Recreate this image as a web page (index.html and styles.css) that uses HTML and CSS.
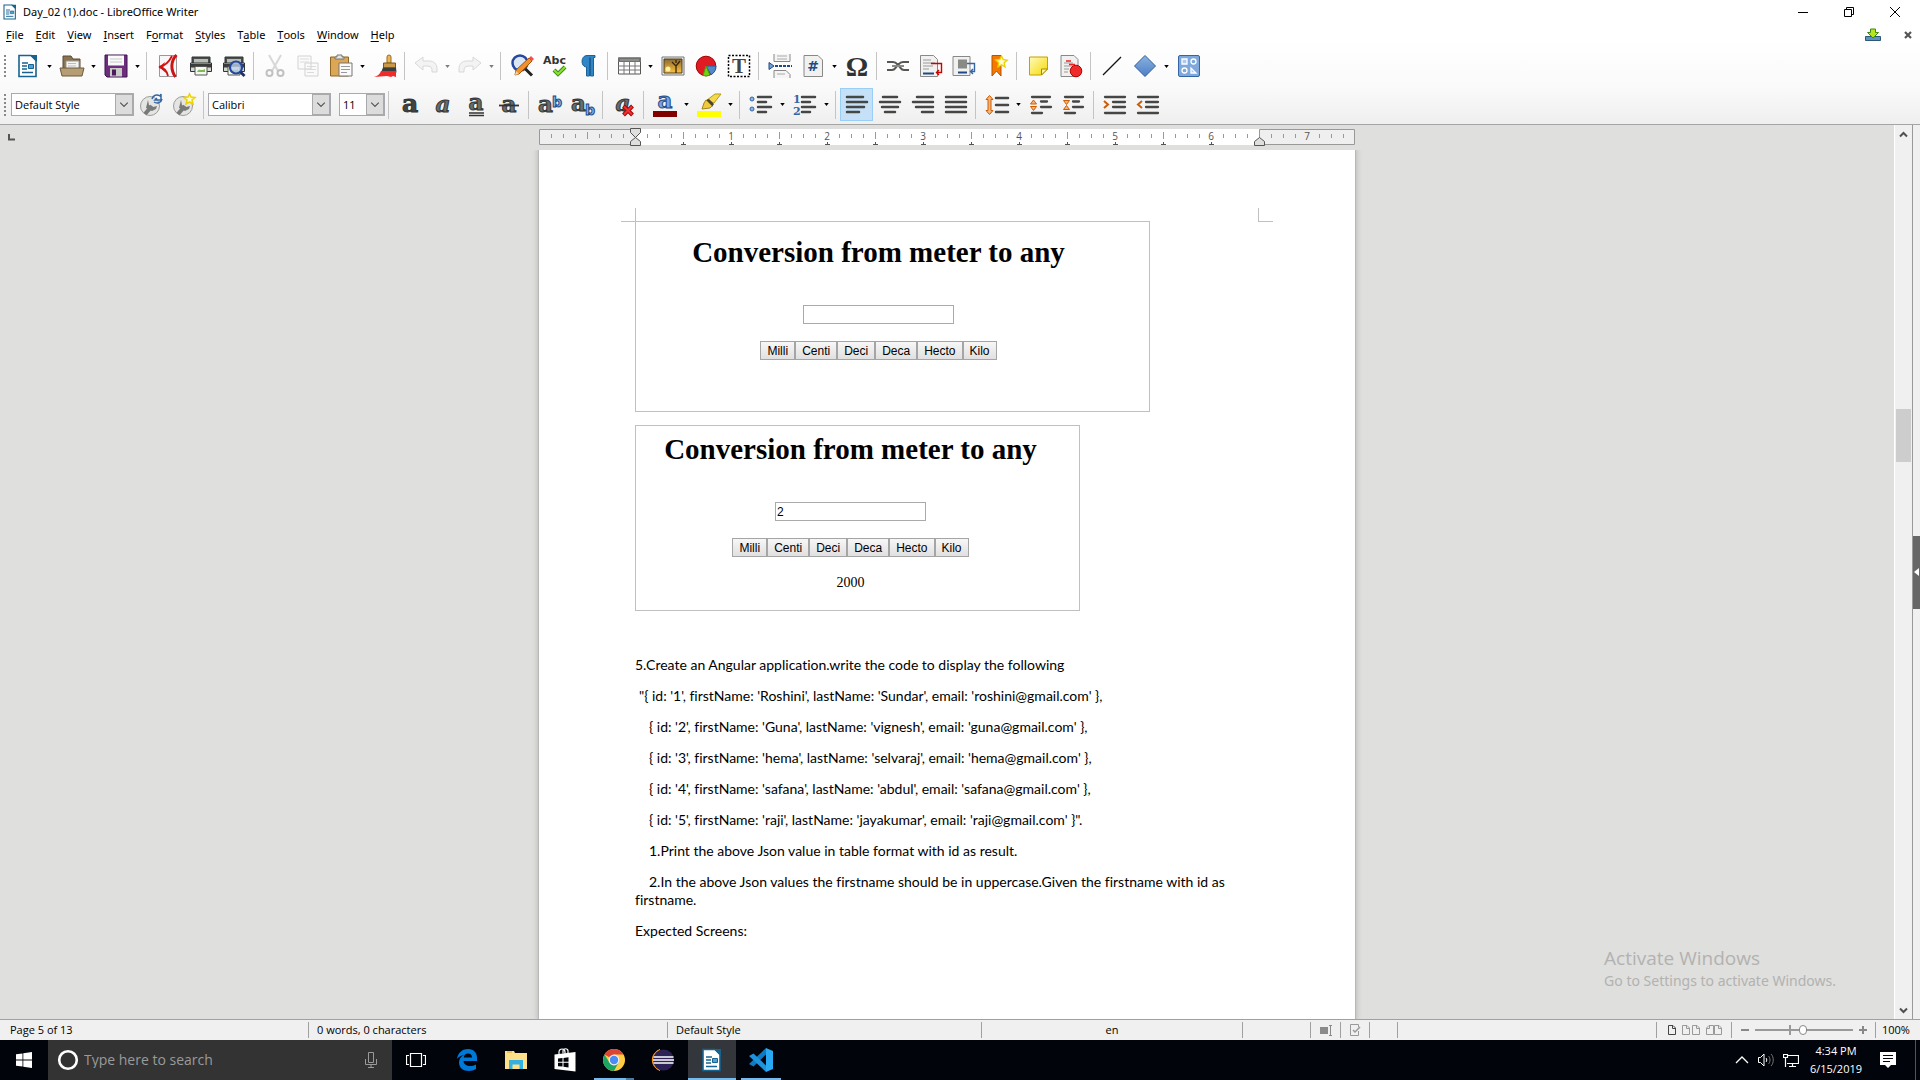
FILE: index.html
```html
<!DOCTYPE html>
<html lang="en">
<head>
<meta charset="utf-8">
<title>Day_02 (1).doc - LibreOffice Writer</title>
<link rel="stylesheet" href="styles.css">
</head>
<body>
<svg class="defs" aria-hidden="true">
  <defs>
    <linearGradient id="gem" x1="0" y1="0" x2="0" y2="1"><stop offset="0" stop-color="#8db2e0"/><stop offset="1" stop-color="#4a7fc4"/></linearGradient>
    <linearGradient id="sun" x1="0" y1="0" x2="0" y2="1"><stop offset="0" stop-color="#8a6a32"/><stop offset="1" stop-color="#ffc23c"/></linearGradient>
    <linearGradient id="note" x1="0" y1="0" x2="1" y2="1"><stop offset="0" stop-color="#fffac0"/><stop offset="1" stop-color="#f6d900"/></linearGradient>
    <symbol id="drop" viewBox="0 0 6 4"><path d="M0 0h6L3 4z"/></symbol>
    <symbol id="chev" viewBox="0 0 10 6"><path d="M1 1l4 4 4-4" fill="none" stroke="#555" stroke-width="1.3"/></symbol>
    <symbol id="doc" viewBox="0 0 24 24"><path d="M3 1.500h12l5 5v16H3z" fill="#fff" stroke="#17638f" stroke-width="1.6"/><path d="M14 1h7v7z" fill="#17638f"/><path d="M6 9h6M6 12h5M6 15h5M6 18.500h11" stroke="#17638f" stroke-width="1.4"/><path d="M12.500 10.500h5v4h-5z" fill="#4ba3d6" stroke="#17638f"/></symbol>
    <symbol id="printer" viewBox="0 0 24 24"><path d="M3 3h18v6H3z" fill="#4a4d4a" stroke="#2e3436"/><path d="M5 5h14v4H5z" fill="#babdb6"/><path d="M1.500 9h21v8.500h-21z" fill="#d3d7cf" stroke="#2e3436"/><path d="M2 10h20v3.500H2z" fill="#3a3d3b"/><path d="M6 12.500h12v8.500H6z" fill="#f4f8ee" stroke="#555753"/><path d="M8 18c2-5 4 0 8-3v3z" fill="#7dbb5a"/></symbol>
    <symbol id="wrench" viewBox="0 0 24 24"><circle cx="11" cy="13" r="9.500" fill="#e4e4e3" stroke="#9c9c9a"/><path d="M6 21l7-8" stroke="#777a78" stroke-width="4"/><path d="M9 7l1 5 4 2 4-1-1 3-4 2-6-3z" fill="#777a78"/></symbol>
    <symbol id="leftlines" viewBox="0 0 24 24"><path d="M2 4h16M2 9h20M2 14h17M2 19h12" stroke="#444743" stroke-width="2.500" stroke-linecap="round"/></symbol>
    <symbol id="page" viewBox="0 0 8 10"><path d="M.5.5h4.500L7.500 3v6.500h-7zM4.500.5v3h3" fill="none" stroke="currentColor"/></symbol>
  </defs>
</svg>

<header class="chrome">
  <div class="titlebar">
    <svg class="app-icon" viewBox="0 0 24 24"><use href="#doc"/></svg>
    <h1 class="title">Day_02 (1).doc - LibreOffice Writer</h1>
    <div class="window-buttons">
      <button class="wbtn" aria-label="Minimize"><svg width="12" height="12"><path d="M1 6.500h10" stroke="#000"/></svg></button>
      <button class="wbtn" aria-label="Restore"><svg width="12" height="12"><path d="M1.500 3.500h7v7h-7zM3.500 3V1.500h7v7H9" fill="none" stroke="#000"/></svg></button>
      <button class="wbtn" aria-label="Close"><svg width="12" height="12"><path d="M1 1l10 10M11 1L1 11" stroke="#000"/></svg></button>
    </div>
  </div>

  <nav class="menubar">
    <button class="menu"><u>F</u>ile</button>
    <button class="menu"><u>E</u>dit</button>
    <button class="menu"><u>V</u>iew</button>
    <button class="menu"><u>I</u>nsert</button>
    <button class="menu">F<u>o</u>rmat</button>
    <button class="menu"><u>S</u>tyles</button>
    <button class="menu">T<u>a</u>ble</button>
    <button class="menu"><u>T</u>ools</button>
    <button class="menu"><u>W</u>indow</button>
    <button class="menu"><u>H</u>elp</button>
    <div class="menu-end">
      <button class="plain" aria-label="Update available"><svg width="16" height="14"><path d="M.5 8.500h15v4H.5z" fill="#5f93bf" stroke="#2d5876"/><path d="M5.500 1h5v3.500h3L8 10 2.500 4.500h3z" fill="#b5e61d" stroke="#3c8a10"/></svg></button>
      <button class="plain" aria-label="Close document"><svg width="8" height="8"><path d="M1 1l6 6M7 1L1 7" stroke="#555" stroke-width="2.200"/></svg></button>
    </div>
  </nav>

  <div class="toolbar">
    <span class="grip"></span>
    <button class="tool" aria-label="New"><svg viewBox="0 0 24 24"><use href="#doc"/></svg></button>
    <button class="drop" aria-label="New options"><svg><use href="#drop"/></svg></button>
    <button class="tool" aria-label="Open"><svg viewBox="0 0 24 24"><path d="M3 2h8l2 3h7v14H3z" fill="#8a7350" stroke="#5d4b30"/><path d="M6 7h13v8H6z" fill="#f4f4f2" stroke="#999"/><path d="M8 9.500h8M8 12h8" stroke="#bbb"/><path d="M0 14h24l-2 8H2z" fill="#b59d76" stroke="#6e5a3b"/></svg></button>
    <button class="drop" aria-label="Open options"><svg><use href="#drop"/></svg></button>
    <button class="tool" aria-label="Save"><svg viewBox="0 0 24 24"><path d="M1 1h22v22H3l-2-2z" fill="#6d2e7e" stroke="#3f1250"/><path d="M4 1.500h16v10H4z" fill="#fafafa"/><path d="M6 5h12M6 8h12" stroke="#c8c8c8"/><path d="M6 14h12v8.500H6z" fill="#c9cbc7"/><path d="M8 15.500h4v6H8z" fill="#4b1b5b"/></svg></button>
    <button class="drop" aria-label="Save options"><svg><use href="#drop"/></svg></button>
    <span class="sep"></span>
    <button class="tool" aria-label="Export as PDF"><svg viewBox="0 0 24 24"><path d="M3.500 1.500h17v21h-17z" fill="#f7f7f7" stroke="#999"/><path d="M20.500 1c-6 6-6 15-1 22" fill="none" stroke="#cf1414" stroke-width="3"/><path d="M16 2c-3 6-7 10-13 11 6 1 8 4 9 9" fill="none" stroke="#cf1414" stroke-width="1.800"/><path d="M9 8l-6 5 7 6-3-6z" fill="#cf1414"/></svg></button>
    <button class="tool" aria-label="Print"><svg viewBox="0 0 24 24"><use href="#printer"/></svg></button>
    <button class="tool" aria-label="Print preview"><svg viewBox="0 0 24 24"><use href="#printer"/><circle cx="14" cy="13.500" r="6" fill="#b9cdea" fill-opacity=".8" stroke="#2547a0" stroke-width="2.200"/><path d="M18.500 18l4 4" stroke="#1c2f6b" stroke-width="2.800"/></svg></button>
    <span class="sep"></span>
    <button class="tool off" aria-label="Cut"><svg viewBox="0 0 24 24"><path d="M6 1l9 16M18 1L9 17" stroke="#b5b5b5" stroke-width="2"/><circle cx="6.500" cy="19" r="3" fill="none" stroke="#888" stroke-width="2"/><circle cx="17.500" cy="19" r="3" fill="none" stroke="#888" stroke-width="2"/></svg></button>
    <button class="tool off" aria-label="Copy"><svg viewBox="0 0 24 24"><path d="M2 2h13v13H2zM9 9h13v13H9z" fill="#fafafa" stroke="#aaa"/><path d="M4 5h9M4 8h9M11 12.500h9M11 15.500h9M11 18.500h7" stroke="#bbb"/></svg></button>
    <button class="tool" aria-label="Paste"><svg viewBox="0 0 24 24"><path d="M1.500 3h18v19h-18z" fill="#dba655" stroke="#8f6420"/><path d="M6 5V3h2V1h5v2h2v2z" fill="#e5e5e3" stroke="#777"/><path d="M10 9h13v13H10z" fill="#fafafa" stroke="#777"/><path d="M12 12.500h9M12 15.500h9M12 18.500h6" stroke="#999"/></svg></button>
    <button class="drop" aria-label="Paste options"><svg><use href="#drop"/></svg></button>
    <button class="tool" aria-label="Clone formatting"><svg viewBox="0 0 24 24"><path d="M14 9V3a2 2 0 0 1 4 0v6z" fill="#eab75c" stroke="#9a6a1c"/><path d="M10.500 9h12v5h-12z" fill="#c99a4a" stroke="#7c5717"/><path d="M10 13.500h13l.5 5H8z" fill="#3a3d3c"/><path d="M8 17h15v6l-3-1-2 1-4-1-13 1c4-1 6-3 7-6z" fill="#ef2b2b"/></svg></button>
    <span class="sep"></span>
    <button class="tool off" aria-label="Undo"><svg viewBox="0 0 24 24"><path d="M1 9l8-6v4h6c5 0 8 3 8 8v3h-5v-2c0-3-2-4-5-4H9v4z" fill="#ececec" stroke="#b5b5b5"/></svg></button>
    <button class="drop off" aria-label="Undo options"><svg><use href="#drop"/></svg></button>
    <button class="tool off" aria-label="Redo"><svg viewBox="0 0 24 24"><path d="M23 9l-8-6v4H9c-5 0-8 3-8 8v3h5v-2c0-3 2-4 5-4h4v4z" fill="#ececec" stroke="#b5b5b5"/></svg></button>
    <button class="drop off" aria-label="Redo options"><svg><use href="#drop"/></svg></button>
    <span class="sep"></span>
    <button class="tool" aria-label="Find and replace"><svg viewBox="0 0 24 24"><circle cx="10" cy="9" r="7.500" fill="#dbe6f5" stroke="#2547a0" stroke-width="2.500"/><path d="M15.500 15l6.500 6.500" stroke="#222" stroke-width="3"/><path d="M5 21l1-5L19 4l3 3L9 20z" fill="#f0912b" stroke="#a1530c"/><path d="M19 4l2-2 3 3-2 2z" fill="#f25050"/><path d="M5 21l1-4 3 3z" fill="#f3d6a4"/></svg></button>
    <button class="tool" aria-label="Spelling"><svg viewBox="0 0 24 24"><text x="0" y="10" class="glyph-abc">Abc</text><path d="M11 16l4 4 7-7" fill="none" stroke="#3b8a10" stroke-width="4"/><path d="M11 16l4 4 7-7" fill="none" stroke="#8ae234" stroke-width="2"/></svg></button>
    <button class="tool" aria-label="Formatting marks"><svg viewBox="0 0 24 24"><path d="M11 1.500h8v2h-1.500V22h-3V3.500h-1V22h-3V13c-6 0-6-11.500.5-11.500z" fill="#2f86c6" stroke="#1c6298"/></svg></button>
    <span class="sep"></span>
    <button class="tool" aria-label="Insert table"><svg viewBox="0 0 24 24"><path d="M1.500 4h22v16h-22z" fill="#fff" stroke="#555753"/><path d="M1 3.500h23V8H1z" fill="#6f726e"/><path d="M3 6h19" stroke="#aaa"/><path d="M1 12h22M1 16h22M7 8v12M12.500 8v12M18 8v12" stroke="#777"/></svg></button>
    <button class="drop" aria-label="Table options"><svg><use href="#drop"/></svg></button>
    <button class="tool" aria-label="Insert image"><svg viewBox="0 0 24 24"><path d="M1 3h22v18H1z" fill="#eee" stroke="#777"/><path d="M3 5h18v14H3z" fill="url(#sun)" stroke="#4b3b1d"/><circle cx="7" cy="15" r="2.500" fill="#fff2a0"/><path d="M15 19v-7l-4-4M15 12l4-5M15 9V6" fill="none" stroke="#3a2507" stroke-width="1.300"/></svg></button>
    <button class="tool" aria-label="Insert chart"><svg viewBox="0 0 24 24"><circle cx="12" cy="12" r="9.800" fill="#e01b24" stroke="#a40000"/><path d="M12 12h10a10 10 0 0 1-5 8.800z" fill="#5588c8" stroke="#2a5a98"/><path d="M12 12l4 9.200a10 10 0 0 1-7 .3z" fill="#73d216" stroke="#4e9a06"/></svg></button>
    <button class="tool" aria-label="Insert text box"><svg viewBox="0 0 24 24"><path d="M1.500 1.500h21v21h-21z" fill="#fff" stroke="#000" stroke-width="1.500" stroke-dasharray="2 1.500"/><text x="12" y="19" text-anchor="middle" class="glyph-t">T</text></svg></button>
    <span class="sep"></span>
    <button class="tool" aria-label="Insert page break"><svg viewBox="0 0 24 24"><path d="M6 0v7.500h16V0M6 24v-7.500h12l4 4V24" fill="#f5f5f5" stroke="#888"/><path d="M9 2h10M9 5h10M9 20h8" stroke="#aaa"/><path d="M7 12h17" stroke="#204a87" stroke-width="2" stroke-dasharray="3 1"/><path d="M1 8.500v7l5-3.500z" fill="#729fcf" stroke="#204a87"/></svg></button>
    <button class="tool" aria-label="Insert field"><svg viewBox="0 0 24 24"><path d="M3 1.500h14l4.500 4.500v16.500H3z" fill="#f1f1f0" stroke="#888"/><text x="12" y="17" text-anchor="middle" class="glyph-hash">#</text></svg></button>
    <button class="drop" aria-label="Field options"><svg><use href="#drop"/></svg></button>
    <button class="tool" aria-label="Special character"><svg viewBox="0 0 24 24"><text x="12" y="22" text-anchor="middle" class="glyph-omega">Ω</text></svg></button>
    <span class="sep"></span>
    <button class="tool" aria-label="Insert hyperlink"><svg viewBox="0 0 24 24"><path d="M1 8h6c3 0 4 2 6 4s2 4 5 4h5M1 16h5c3 0 3-2 5-4s3-4 6-4h6" fill="none" stroke="#555753" stroke-width="2"/><path d="M6 12h12" stroke="#888a85" stroke-width="2"/></svg></button>
    <button class="tool" aria-label="Insert footnote"><svg viewBox="0 0 24 24"><path d="M1.500 1.500h13l4 4v17h-17z" fill="#f1f1f0" stroke="#888"/><path d="M4 6h8M4 9h12M4 12h10M4 15h6" stroke="#999"/><path d="M4 19.500h11" stroke="#204a87" stroke-width="2"/><path d="M12 9.500h10.500v9H18m2-2.500l-2.500 2.500L20 21" fill="none" stroke="#c00" stroke-width="1.400"/></svg></button>
    <button class="tool" aria-label="Insert endnote"><svg viewBox="0 0 24 24"><path d="M1 2.500h17v19H1z" fill="#f1f1f0" stroke="#888"/><path d="M6 5.500h9v9H6z" fill="#888a85"/><path d="M6 18.500h9" stroke="#204a87" stroke-width="2"/><path d="M15 9.500h7.500v8H19m2-2.500l-2.500 2.500L21 20" fill="none" stroke="#3465a4" stroke-width="1.400"/></svg></button>
    <button class="tool" aria-label="Insert bookmark"><svg viewBox="0 0 24 24"><path d="M7 1.500h9V22l-4.500-5L7 22z" fill="#f57900" stroke="#b35400"/><path d="M16.500 2l1.700 3.500 4 .6-3 2.700.8 4-3.500-1.900-3.500 1.900.7-4-2.900-2.700 4-.6z" fill="#fffbd0" stroke="#edd400" stroke-width="1.400"/></svg></button>
    <span class="sep"></span>
    <button class="tool" aria-label="Insert comment"><svg viewBox="0 0 24 24"><path d="M3.500 3h18v12l-6 6h-12z" fill="url(#note)" stroke="#c4a000"/><path d="M15.500 21v-6h6z" fill="#fff7a0" stroke="#a58a00"/></svg></button>
    <button class="tool" aria-label="Track changes"><svg viewBox="0 0 24 24"><path d="M2 1.500h13l4 4v17H2z" fill="#f1f1f0" stroke="#888"/><path d="M5 9h9M5 12h9M5 15h5M5 18h4" stroke="#999"/><path d="M7 7h5M10 10.500h6" stroke="#e22" stroke-width="1.500"/><circle cx="17" cy="17" r="5.800" fill="#ee2a2a" stroke="#b80000"/></svg></button>
    <span class="sep"></span>
    <button class="tool" aria-label="Line"><svg viewBox="0 0 24 24"><path d="M3 21L21 3" stroke="#111" stroke-width="1.300"/></svg></button>
    <button class="tool" aria-label="Basic shapes"><svg viewBox="0 0 24 24"><path d="M12 1.500L22.500 12 12 22.500 1.500 12z" fill="url(#gem)" stroke="#2d5d9f"/></svg></button>
    <button class="drop" aria-label="Shape options"><svg><use href="#drop"/></svg></button>
    <button class="tool" aria-label="Show draw functions"><svg viewBox="0 0 24 24"><rect x="1.500" y="1.500" width="21" height="21" rx="1.500" fill="#7fa8dc" stroke="#3465a4"/><path d="M5 5h5v5H5zM14 19v-5l5 5z" fill="#aecaf0" stroke="#fff" stroke-width="1.300"/><circle cx="16.500" cy="7.500" r="2.500" fill="none" stroke="#fff" stroke-width="1.300"/><circle cx="7.500" cy="16.500" r="2.500" fill="none" stroke="#fff" stroke-width="1.300"/></svg></button>
  </div>

  <div class="toolbar toolbar-format">
    <span class="grip"></span>
    <span class="combo combo-style"><select aria-label="Paragraph style"><option>Default Style</option></select><svg class="combo-arrow" viewBox="0 0 16 20"><use href="#chev" x="3" y="7" width="10" height="6"/></svg></span>
    <button class="tool" aria-label="Update style"><svg viewBox="0 0 24 24"><use href="#wrench"/><path d="M13 6c1-4 5-5 8-3l1-2v6h-6l2-2M23 6c-1 4-5 5-8 3" fill="none" stroke="#3465a4" stroke-width="1.500"/></svg></button>
    <button class="tool" aria-label="New style"><svg viewBox="0 0 24 24"><use href="#wrench"/><path d="M17.500 1l1.500 3 4 .5-3 2.500 1 4-3.500-2-3.500 2 1-4-3-2.500 4-.5z" fill="#fffbd0" stroke="#edd400" stroke-width="1.600"/></svg></button>
    <span class="sep"></span>
    <span class="combo combo-font"><select aria-label="Font name"><option>Calibri</option></select><svg class="combo-arrow" viewBox="0 0 16 20"><use href="#chev" x="3" y="7" width="10" height="6"/></svg></span>
    <span class="combo combo-size"><select aria-label="Font size"><option>11</option></select><svg class="combo-arrow" viewBox="0 0 16 20"><use href="#chev" x="3" y="7" width="10" height="6"/></svg></span>
    <span class="sep"></span>
    <button class="tool" aria-label="Bold"><svg viewBox="0 0 24 24"><text x="12" y="19" text-anchor="middle" class="glyph-a heavy">a</text></svg></button>
    <button class="tool" aria-label="Italic"><svg viewBox="0 0 24 24"><text x="12" y="19" text-anchor="middle" class="glyph-a slant">a</text></svg></button>
    <button class="tool" aria-label="Underline"><svg viewBox="0 0 24 24"><text x="12" y="17" text-anchor="middle" class="glyph-a">a</text><path d="M5 20h15M5 22.500h15" stroke="#333" stroke-width="1.300"/></svg></button>
    <button class="tool" aria-label="Strikethrough"><svg viewBox="0 0 24 24"><text x="12" y="19" text-anchor="middle" class="glyph-a">a</text><path d="M2 12.500h20" stroke="#333" stroke-width="1.800"/></svg></button>
    <span class="sep"></span>
    <button class="tool" aria-label="Superscript"><svg viewBox="0 0 24 24"><text x="0" y="19" class="glyph-a">a</text><text x="14" y="14" class="glyph-b">b</text></svg></button>
    <button class="tool" aria-label="Subscript"><svg viewBox="0 0 24 24"><text x="0" y="18" class="glyph-a">a</text><text x="14" y="22" class="glyph-b">b</text></svg></button>
    <span class="sep"></span>
    <button class="tool" aria-label="Clear formatting"><svg viewBox="0 0 24 24"><text x="11" y="18" text-anchor="middle" class="glyph-a slant">a</text><path d="M11.500 13l9 9M20.500 13l-9 9" stroke="#a40000" stroke-width="4"/><path d="M12 13.500l8 8M20 13.500l-8 8" stroke="#f03030" stroke-width="2.200"/></svg></button>
    <span class="sep"></span>
    <button class="tool" aria-label="Font color"><svg viewBox="0 0 24 24"><text x="12" y="15" text-anchor="middle" class="glyph-a blue">a</text><path d="M0 18h24v6H0z" fill="#800000"/></svg></button>
    <button class="drop" aria-label="Font color options"><svg><use href="#drop"/></svg></button>
    <button class="tool" aria-label="Highlighting"><svg viewBox="0 0 24 24"><path d="M10 7l8-6h6l-7 9z" fill="#f5d94a" stroke="#b79a1c"/><path d="M9 7l3-1 5 5-2 3z" fill="#444"/><path d="M9 7l6 6-2 2-8 1 2-6z" fill="#f0ca3c" stroke="#a58614"/><path d="M0 18h24v6H0z" fill="#ff0"/></svg></button>
    <button class="drop" aria-label="Highlighting options"><svg><use href="#drop"/></svg></button>
    <span class="sep"></span>
    <button class="tool" aria-label="Bullets"><svg viewBox="0 0 24 24"><circle cx="3" cy="6" r="2" fill="#8fb3df" stroke="#3465a4"/><circle cx="3" cy="16" r="2" fill="#8fb3df" stroke="#3465a4"/><path d="M9 4h13M9 9h8M9 14h13M9 19h8" stroke="#444743" stroke-width="2.500" stroke-linecap="round"/></svg></button>
    <button class="drop" aria-label="Bullet options"><svg><use href="#drop"/></svg></button>
    <button class="tool" aria-label="Numbering"><svg viewBox="0 0 24 24"><text x="0" y="10" class="glyph-n">1</text><text x="0" y="22" class="glyph-n">2</text><path d="M9 4h13M9 9h8M9 14h13M9 19h8" stroke="#444743" stroke-width="2.500" stroke-linecap="round"/></svg></button>
    <button class="drop" aria-label="Numbering options"><svg><use href="#drop"/></svg></button>
    <span class="sep"></span>
    <button class="tool pressed" aria-label="Align left"><svg viewBox="0 0 24 24"><use href="#leftlines"/></svg></button>
    <button class="tool" aria-label="Center"><svg viewBox="0 0 24 24"><path d="M5 4h14M2 9h20M4 14h16M7 19h10" stroke="#444743" stroke-width="2.500" stroke-linecap="round"/></svg></button>
    <button class="tool" aria-label="Align right"><svg viewBox="0 0 24 24"><path d="M6 4h16M2 9h20M5 14h17M11 19h11" stroke="#444743" stroke-width="2.500" stroke-linecap="round"/></svg></button>
    <button class="tool" aria-label="Justify"><svg viewBox="0 0 24 24"><path d="M2 4h20M2 9h20M2 14h20M2 19h20" stroke="#444743" stroke-width="2.500" stroke-linecap="round"/></svg></button>
    <span class="sep"></span>
    <button class="tool" aria-label="Line spacing"><svg viewBox="0 0 24 24"><path d="M4.500 2.500L8 6.500H6v11h2l-3.500 4L1 17.500h2v-11H1z" fill="#f5b47a" stroke="#ce5c00"/><path d="M11 5h12M11 12h12M11 19h12" stroke="#444743" stroke-width="2.500" stroke-linecap="round"/></svg></button>
    <button class="drop" aria-label="Line spacing options"><svg><use href="#drop"/></svg></button>
    <button class="tool" aria-label="Increase paragraph spacing"><svg viewBox="0 0 24 24"><path d="M3 4h18M12 8.500h6M12 14h10M3 20h10" stroke="#444743" stroke-width="2.300" stroke-linecap="round"/><path d="M1.500 11L4.500 7l3 4zM1.500 13.500l3 4 3-4z" fill="#f5b47a" stroke="#ce5c00"/></svg></button>
    <button class="tool" aria-label="Decrease paragraph spacing"><svg viewBox="0 0 24 24"><path d="M3 4h18M11 8.500h6M11 14h10M3 20h10" stroke="#444743" stroke-width="2.300" stroke-linecap="round"/><path d="M1.500 7.500h6l-3 4zM1.500 16.500l3-4 3 4z" fill="#f5b47a" stroke="#ce5c00"/></svg></button>
    <span class="sep"></span>
    <button class="tool" aria-label="Increase indent"><svg viewBox="0 0 24 24"><path d="M2 4h20M10 9h12M10 14h12M2 20h20" stroke="#444743" stroke-width="2.300" stroke-linecap="round"/><path d="M1 8l4 3.500L1 15" fill="none" stroke="#ce5c00" stroke-width="2"/></svg></button>
    <button class="tool" aria-label="Decrease indent"><svg viewBox="0 0 24 24"><path d="M2 4h20M10 9h12M10 14h12M2 20h20" stroke="#444743" stroke-width="2.300" stroke-linecap="round"/><path d="M6 8l-4 3.500L6 15" fill="none" stroke="#ce5c00" stroke-width="2"/></svg></button>
  </div>
</header>

<main class="workspace">
  <div class="canvas">
    <svg class="tab-type" width="7" height="7"><path d="M1 0v5.500h6" fill="none" stroke="#555" stroke-width="2"/></svg>
    <svg class="ruler" viewBox="0 0 816 18">
      <defs>
        <pattern id="eighths" width="48" height="18" patternUnits="userSpaceOnUse"><path d="M12 5h1v4h-1zM24 5h1v4h-1zM36 5h1v4h-1z" fill="#999"/></pattern>
        <pattern id="halves" width="96" height="18" patternUnits="userSpaceOnUse"><path d="M48 3h1v7h-1z" fill="#999"/></pattern>
        <pattern id="stops" width="48" height="18" patternUnits="userSpaceOnUse"><path d="M0 13h1v3h-1zM0 15h3v1H0zM46 15h2v1h-2z" fill="#555"/></pattern>
      </defs>
      <path d="M0 0h816v16H0z" fill="#fff"/>
      <path d="M.5.5h96v15H.5zM720.500.5h95v15h-95z" fill="#efefef" stroke="#999"/>
      <path d="M0 0h810v18H0z" fill="url(#eighths)"/>
      <path d="M0 0h710v18H0z" fill="url(#halves)"/>
      <path d="M140 0h540v18H140z" fill="url(#stops)"/>
      <g class="ruler-text" text-anchor="middle">
        <text x="192" y="11">1</text><text x="288" y="11">2</text><text x="384" y="11">3</text><text x="480" y="11">4</text><text x="576" y="11">5</text><text x="672" y="11">6</text><text x="768" y="11">7</text>
      </g>
      <path d="M91.500-.5h10v4l-5 5-5-5zM91.500 16.500h10v-4l-5-4-5 4zM715.500 16.500h10v-4l-5-4-5 4z" fill="#dfdfdd" stroke="#555"/>
    </svg>

    <article class="paper">
      <div class="crop-marks"><span class="mark mark-left"></span><span class="mark mark-right"></span></div>
      <section class="frame frame-wide">
        <h2 class="frame-title">Conversion from meter to any</h2>
        <input class="value" type="text" aria-label="Meters, first form">
        <div class="units">
          <button class="unit">Milli</button><button class="unit">Centi</button><button class="unit">Deci</button><button class="unit">Deca</button><button class="unit">Hecto</button><button class="unit">Kilo</button>
        </div>
      </section>
      <section class="frame frame-result">
        <h2 class="frame-title">Conversion from meter to any</h2>
        <input class="value" type="text" value="2" aria-label="Meters, second form">
        <div class="units">
          <button class="unit">Milli</button><button class="unit">Centi</button><button class="unit">Deci</button><button class="unit">Deca</button><button class="unit">Hecto</button><button class="unit">Kilo</button>
        </div>
        <output class="result">2000</output>
      </section>
      <div class="prose">
        <p>5.Create an Angular application.write the code to display the following</p>
        <p class="quote">"{ id: '1', firstName: 'Roshini', lastName: 'Sundar', email: 'roshini@gmail.com' },</p>
        <p class="step">{ id: '2', firstName: 'Guna', lastName: 'vignesh', email: 'guna@gmail.com' },</p>
        <p class="step">{ id: '3', firstName: 'hema', lastName: 'selvaraj', email: 'hema@gmail.com' },</p>
        <p class="step">{ id: '4', firstName: 'safana', lastName: 'abdul', email: 'safana@gmail.com' },</p>
        <p class="step">{ id: '5', firstName: 'raji', lastName: 'jayakumar', email: 'raji@gmail.com' }".</p>
        <p class="step">1.Print the above Json value in table format with id as result.</p>
        <p class="step">2.In the above Json values the firstname should be in uppercase.Given the firstname with id as firstname.</p>
        <p>Expected Screens:</p>
      </div>
    </article>

    <aside class="watermark">
      <p class="watermark-title">Activate Windows</p>
      <p class="watermark-text">Go to Settings to activate Windows.</p>
    </aside>
  </div>
  <div class="scrollbar">
    <button class="plain" aria-label="Scroll up"><svg width="9" height="7"><path d="M1 5.500l3.500-3.500L8 5.500" fill="none" stroke="#505050" stroke-width="2"/></svg></button>
    <div class="track"><span></span><span class="thumb"></span><span></span></div>
    <button class="plain" aria-label="Scroll down"><svg width="9" height="7"><path d="M1 1.500L4.500 5 8 1.500" fill="none" stroke="#505050" stroke-width="2"/></svg></button>
  </div>
  <div class="sidebar"><button class="handle" aria-label="Show sidebar"><svg width="5" height="8"><path d="M5 0v8L0 4z" fill="#fff"/></svg></button></div>
</main>

<footer class="status">
  <span class="cell lead">Page 5 of 13</span>
  <span class="cell">0 words, 0 characters</span>
  <span class="cell">Default Style</span>
  <span class="cell mid">en</span>
  <span class="cell"></span>
  <span class="cell mid"><svg width="12" height="11"><path d="M0 2h8v7H0z" fill="#8a8a8a"/><path d="M9 .5h3M9 10.500h3M10.500 0v11" stroke="#8a8a8a"/></svg></span>
  <span class="cell mid"><svg width="12" height="12"><path d="M9.500 7v4.500h-8V.5h8V3" fill="none" stroke="#999"/><path d="M4 6l2 2 5-5" fill="none" stroke="#999" stroke-width="1.500"/></svg></span>
  <span class="cell"></span>
  <span class="cell"></span>
  <span class="cell views"><svg class="view now"><use href="#page"/></svg><span class="pair"><svg class="view"><use href="#page"/></svg><svg class="view"><use href="#page"/></svg></span><svg class="book" viewBox="0 0 16 10"><path d="M.5 3L3 .5h4.500v9h-7zM15.500 3L13 .5H8.500v9h7zM3.500.5v3h-3M12.500.5v3h3" fill="none" stroke="currentColor"/></svg></span>
  <span class="cell mid zoom"><svg width="8" height="8"><path d="M0 4h8" stroke="#888" stroke-width="2"/></svg><input class="slider" type="range" min="0" max="100" value="49" aria-label="Zoom"><svg width="8" height="8"><path d="M0 4h8M4 0v8" stroke="#888" stroke-width="2"/></svg></span>
  <span class="cell percent">100%</span>
</footer>

<nav class="taskbar">
  <button class="task start" aria-label="Start"><svg width="16" height="16"><path d="M0 2.300L6.500 1.400v6.200H0zM7.300 1.300L16 0v7.600H7.300zM0 8.400h6.500v6.200L0 13.700zM7.300 8.400H16V16l-8.700-1.300z" fill="#fff"/></svg></button>
  <label class="search">
    <svg width="22" height="22"><circle cx="11" cy="11" r="8.800" fill="none" stroke="#fff" stroke-width="2.600"/></svg>
    <input type="text" placeholder="Type here to search" aria-label="Search">
    <svg width="12" height="18"><path d="M3.500 1.500h5v10h-5zM.5 8v5.500h11V8M6 13.500V17M3 16.500h6" fill="none" stroke="#9a9a9a"/></svg>
  </label>
  <button class="task" aria-label="Task view"><svg width="20" height="14"><path d="M4.500.5h11v13h-11zM3 2.500H.5v9H3M17 2.500h2.500v9H17" fill="none" stroke="#fff" stroke-width="1.200"/></svg></button>
  <div class="apps">
    <button class="task" aria-label="Edge"><svg viewBox="0 0 24 24"><path d="M2 11C3 4 8 1 13 1c6 0 9 4 9 9v3H8.500c.3 3.500 3 5 6.500 5 2 0 4-.5 6-1.600V21c-2 1.300-4.500 2-7 2-6 0-10-3.500-10-8.500C4 11 6 8.500 9 7c-3 .5-5.500 2-7 4zM8.700 9.500H17c0-2.500-1.500-4-4-4s-4 1.500-4.300 4z" fill="#0078d7"/></svg></button>
    <button class="task" aria-label="File explorer"><svg viewBox="0 0 24 24"><path d="M1 3h9l1 2h12v16H1z" fill="#ffe08a"/><path d="M3 4h5" stroke="#e0a020"/><path d="M5 12h14v9h-3.500v-4.500h-7V21H5z" fill="#35b1e1"/></svg></button>
    <button class="task" aria-label="Store"><svg viewBox="0 0 24 24"><path d="M1.500 6.500L22.500 4v19.500L1.500 21z" fill="#fff"/><path d="M6 6V4c0-4 6-4 6 0v2M10 5.500V3c0-3 5-3 5 0v2" fill="none" stroke="#fff" stroke-width="1.200"/><path d="M5 10.500l4.500-.5v3.800H5zM10.500 9.900l5-.6v4.500h-5zM5 14.800h4.500v3.800L5 18.200zM10.500 14.800h5v4.600l-5-.6z" fill="#01040a"/></svg></button>
    <button class="task running stacked" aria-label="Chrome"><svg viewBox="0 0 24 24"><circle cx="12" cy="12" r="11" fill="#ffcd42"/><path d="M12 12L2.500 6.500A11 11 0 0 1 21.500 6.500H12z" fill="#db4437"/><path d="M2.500 6.500A11 11 0 0 0 12 23l4.500-8.500L12 12 7.500 14.500z" fill="#1da362"/><circle cx="12" cy="12" r="5.400" fill="#f1f1f1"/><circle cx="12" cy="12" r="4.200" fill="#4c8bf5"/></svg></button>
    <button class="task" aria-label="Eclipse"><svg viewBox="0 0 24 24"><path d="M9 1.500A11 11 0 0 0 9 22.500 13 13 0 0 1 9 1.500z" fill="#f7941e" stroke="#f7941e"/><circle cx="12.500" cy="12" r="10.500" fill="#2c2255"/><path d="M2.500 9h20M2 12h21M2.500 15h20" stroke="#fff" stroke-width="1.600"/></svg></button>
    <button class="task running active" aria-label="LibreOffice Writer"><svg viewBox="0 0 24 24"><use href="#doc"/></svg></button>
    <button class="task running open" aria-label="Visual Studio Code"><svg viewBox="0 0 24 24"><path d="M17 0l7 3v18l-7 3z" fill="#29a9f2"/><path d="M17 0v6.500L4.500 18.500 0 16z" fill="#0a7bc4"/><path d="M0 8l4.500-2.500L17 17.500V24z" fill="#1e93dc"/></svg></button>
  </div>
  <div class="tray">
    <button class="plain" aria-label="Hidden icons"><svg width="14" height="8"><path d="M1 7l6-6 6 6" fill="none" stroke="#fff" stroke-width="1.300"/></svg></button>
    <button class="plain" aria-label="Volume"><svg width="16" height="14"><path d="M.5 4.500h2L6 1v12L2.500 9.500h-2z" fill="none" stroke="#fff"/><path d="M8 5c1 1 1 3 0 4" fill="none" stroke="#fff"/><path d="M10.500 3c2 2 2 6 0 8M13 1c3 3 3 9 0 12" fill="none" stroke="#777"/></svg></button>
    <button class="plain" aria-label="Network"><svg width="16" height="15"><path d="M5 2.500h10.500v8H4M.5 1.500h4v3h-4zM2.500 4.500V14M9.500 11v3M6 13.500h7" fill="none" stroke="#fff" stroke-width="1.200"/></svg></button>
    <button class="clock"><time>4:34 PM</time><time>6/15/2019</time></button>
    <button class="plain" aria-label="Notifications"><svg width="16" height="16"><path d="M0 0h16v13h-5l-3 3-3-3H0z" fill="#fff"/><path d="M3 3.500h10M3 6.500h10M3 9.500h7" stroke="#01040a"/></svg></button>
  </div>
  <span class="peek"></span>
</nav>
</body>
</html>
```
FILE: styles.css
```css
* { box-sizing: border-box; }

html, body { height: 100%; }

body {
  margin: 0;
  display: flex;
  flex-direction: column;
  overflow: hidden;
  background: #dfdfdd;
  color: #000;
  font: 12px/16px "Open Sans", "Noto Sans", sans-serif;
}

button, input, select { font: inherit; color: inherit; margin: 0; }

button {
  display: flex;
  align-items: center;
  justify-content: center;
  flex: none;
  padding: 0;
  border: 0;
  background: none;
}

h1, h2, p { margin: 0; font-weight: normal; }

svg { display: block; flex: none; }

.defs { position: absolute; width: 0; height: 0; }

/* Window frame */
.chrome {
  flex: none;
  border-bottom: 1px solid #a5a5a5;
  background: linear-gradient(#fff 30%, #fafafa 70%, #efefef);
}

.titlebar { display: flex; align-items: center; height: 23px; padding-left: 2px; }
.app-icon { width: 16px; height: 16px; }
.title { flex: 1; padding-left: 5px; font: 11px/16px "Noto Sans", sans-serif; }
.window-buttons { display: flex; padding-right: 2px; }
.wbtn { width: 46px; height: 23px; }

.menubar {
  display: flex;
  align-items: center;
  height: 24px;
  padding-left: 6px;
  gap: 12px;
  font: 11px/16px "Noto Sans", sans-serif;
}
.menubar u { text-underline-offset: 2px; }
.menu-end { display: flex; gap: 23px; margin-left: auto; padding-right: 8px; }

/* Toolbars */
.toolbar { display: flex; align-items: center; height: 38px; }
.toolbar-format { height: 39px; }
.grip {
  width: 2px;
  height: 22px;
  margin: 0 5px 0 4px;
  background: repeating-linear-gradient(#888 0 2px, transparent 2px 4px);
}
.tool { width: 33px; height: 33px; }
.tool svg { width: 24px; height: 24px; overflow: visible; }
.drop { width: 11px; height: 33px; }
.drop svg { width: 5px; height: 3px; }
.off { opacity: .5; }
.pressed { border: 1px solid #99cff5; background: #c5e0f7; }
.sep { width: 1px; height: 28px; margin: 0 4px 0 3px; background: #c4c4c4; }

.combo { position: relative; flex: none; height: 23px; border: 1px solid #a9a9b1; background: #fff; }
.combo select {
  width: 100%;
  height: 100%;
  padding: 0 18px 0 3px;
  border: 0;
  background: none;
  appearance: none;
  font-size: 11px;
}
.combo-arrow {
  position: absolute;
  top: 0;
  right: 0;
  width: 18px;
  height: 21px;
  border: 1px solid #aaa;
  background: #dcdcdc;
  pointer-events: none;
}
.combo-style { width: 123px; }
.combo-font { width: 123px; }
.combo-size { width: 46px; margin-left: 8px; }

.glyph-abc { font: bold 11px "DejaVu Sans", sans-serif; fill: #333; }
.glyph-t { font: bold 21px "Liberation Serif", serif; fill: #444; }
.glyph-hash { font: bold 14px "DejaVu Sans", sans-serif; fill: #204a87; }
.glyph-omega { font: bold 28px "Liberation Serif", serif; fill: #2e3436; }
.glyph-a { font: bold 23px "DejaVu Serif", serif; fill: #6a6d69; stroke: #2e3436; stroke-width: 1px; }
.glyph-a.heavy { font-size: 25px; fill: #444; }
.glyph-a.slant { font-style: italic; }
.glyph-a.blue { fill: #7ba4dc; stroke: #204a87; }
.glyph-b { font: bold 14px "DejaVu Sans", sans-serif; fill: #8fb3df; stroke: #204a87; stroke-width: 1px; }
.glyph-n { font: bold 11px "DejaVu Serif", serif; fill: #3465a4; }

/* Editing area */
.workspace { display: flex; flex: 1; min-height: 0; }
.canvas {
  position: relative;
  display: flex;
  flex: 1;
  flex-direction: column;
  align-items: center;
  min-width: 0;
  overflow: hidden;
}
.tab-type { position: absolute; top: 9px; left: 8px; }
.ruler { width: 8.5in; height: 18px; margin-top: 4px; overflow: visible; }
.ruler-text { font: 10px "Open Sans", sans-serif; fill: #555; }

.paper {
  width: 8.5in;
  flex: 1 0 auto;
  margin-top: 3px;
  padding: 58px 82px 0;
  background: #fff;
  box-shadow: 0 0 0 1px #b8b8b8, 0 0 5px 2px #bdbdbb;
  clip-path: inset(0 -8px);
}
.crop-marks { display: flex; justify-content: space-between; }
.mark { width: 15px; height: 14px; border-bottom: 1px solid #c0c0c0; }
.mark-left { border-right: 1px solid #c0c0c0; }
.mark-right { border-left: 1px solid #c0c0c0; }

.frame {
  display: flex;
  flex-direction: column;
  align-items: center;
  margin-left: 14px;
  border: 1px solid #c0c0c0;
}
.frame-wide { width: 515px; height: 191px; margin-top: -1px; padding: 12px 28px 0 0; }
.frame-result { width: 445px; height: 186px; margin-top: 13px; padding: 5px 14px 0 0; }
.frame-title { font: bold 29px/36px "Liberation Serif", serif; }
.value {
  width: 151px;
  height: 19px;
  margin: 35px 0 17px;
  padding: 0 1px;
  border: 1px solid #aaa;
  background: #fff;
  font: 12px/16px "Liberation Sans", sans-serif;
}
.units { display: flex; }
.unit {
  height: 19px;
  padding: 0 6px;
  border: 1px solid #a5a5a5;
  background: linear-gradient(#f7f7f7, #e0e0e0);
  font: 12px/16px "Liberation Sans", sans-serif;
}
.result { margin-top: 18px; font: 14px/16px "Liberation Serif", serif; }

.prose {
  padding: 45px 14px 0;
  font: 14px/18px Lato, sans-serif;
  font-variant-ligatures: none;
}
.prose p { margin-bottom: 13px; }
.prose .quote { text-indent: 4px; }
.prose .step { text-indent: 14px; }

.watermark { position: absolute; right: 58px; bottom: 28px; color: #b2b2b1; }
.watermark-title { font-size: 19px; line-height: 26px; }
.watermark-text { font: 14px/20px "Noto Sans", sans-serif; }

.scrollbar {
  display: flex;
  flex: none;
  flex-direction: column;
  align-items: center;
  width: 18px;
  padding: 6px 0 5px;
  border-left: 1px solid #fff;
  background: #f0f0f0;
}
.track { display: grid; grid-template-rows: 271fr 53px 545fr; flex: 1; width: 15px; }
.thumb { background: #cdcdcd; }
.sidebar {
  display: flex;
  flex: none;
  align-items: center;
  width: 8px;
  border-left: 1px solid #999;
  background: #f0f0f0;
}
.handle { width: 7px; height: 73px; background: #676767; }

/* Status bar */
.status {
  display: grid;
  flex: none;
  grid-template-columns: 308fr 359fr 314fr 261fr 68px 30px 29px 28px 259fr 75px 144px 45px;
  align-items: center;
  height: 21px;
  border-top: 1px solid #a0a0a0;
  background: #f0f0f0;
  font-size: 11px;
}
.cell { display: flex; align-items: center; height: 16px; padding-left: 8px; border-left: 1px solid #a0a0a0; }
.lead { border-left-color: transparent; padding-left: 9px; }
.mid { justify-content: center; padding: 0; }
.percent { padding-left: 6px; }
.views { gap: 6px; padding-left: 11px; color: #999; }
.pair { display: flex; gap: 2px; }
.view { width: 8px; height: 10px; }
.book { width: 16px; height: 10px; }
.now { color: #444; }
.zoom { gap: 6px; }
.slider {
  width: 98px;
  height: 12px;
  appearance: none;
  background:
    linear-gradient(#999, #999) 36% center / 2px 10px no-repeat,
    linear-gradient(#999, #999) center / 100% 2px no-repeat;
}
.slider::-webkit-slider-thumb {
  width: 8px;
  height: 10px;
  border: 1px solid #888;
  border-radius: 4px;
  appearance: none;
  background: #fff;
}

/* Taskbar */
.taskbar { display: flex; flex: none; align-items: center; height: 40px; background: #01040a; color: #fff; }
.task { width: 48px; height: 40px; border-bottom: 2px solid transparent; border-top: 2px solid transparent; }
.search { display: flex; align-items: center; width: 344px; height: 40px; padding: 0 15px 0 9px; background: #333; }
.search input {
  flex: 1;
  min-width: 0;
  padding: 0 0 0 5px;
  border: 0;
  background: none;
  font-size: 14px;
}
.search input::placeholder { color: #9a9a9a; opacity: 1; }
.apps { display: flex; gap: 1px; padding-left: 3px; }
.apps svg { width: 24px; height: 24px; }
.running { border-bottom-color: #76b9ed; }
.open { background: linear-gradient(#76b9ed, #76b9ed) center bottom / 40px 2px no-repeat border-box; border-bottom-color: transparent; }
.stacked {
  background:
    linear-gradient(90deg, #76b9ed 80%, #4a7ba5 80%) center bottom / 40px 2px no-repeat border-box;
  border-bottom-color: transparent;
}
.active { background: #33373b; border-top-color: #33373b; }
.tray { display: flex; align-items: center; gap: 9px; margin-left: auto; padding-right: 19px; }
.clock { flex-direction: column; width: 56px; font-size: 11px; line-height: 18px; }
.tray .plain:last-child { margin-left: 7px; }
.peek { width: 1px; height: 40px; margin-right: 4px; background: #555; }
```
